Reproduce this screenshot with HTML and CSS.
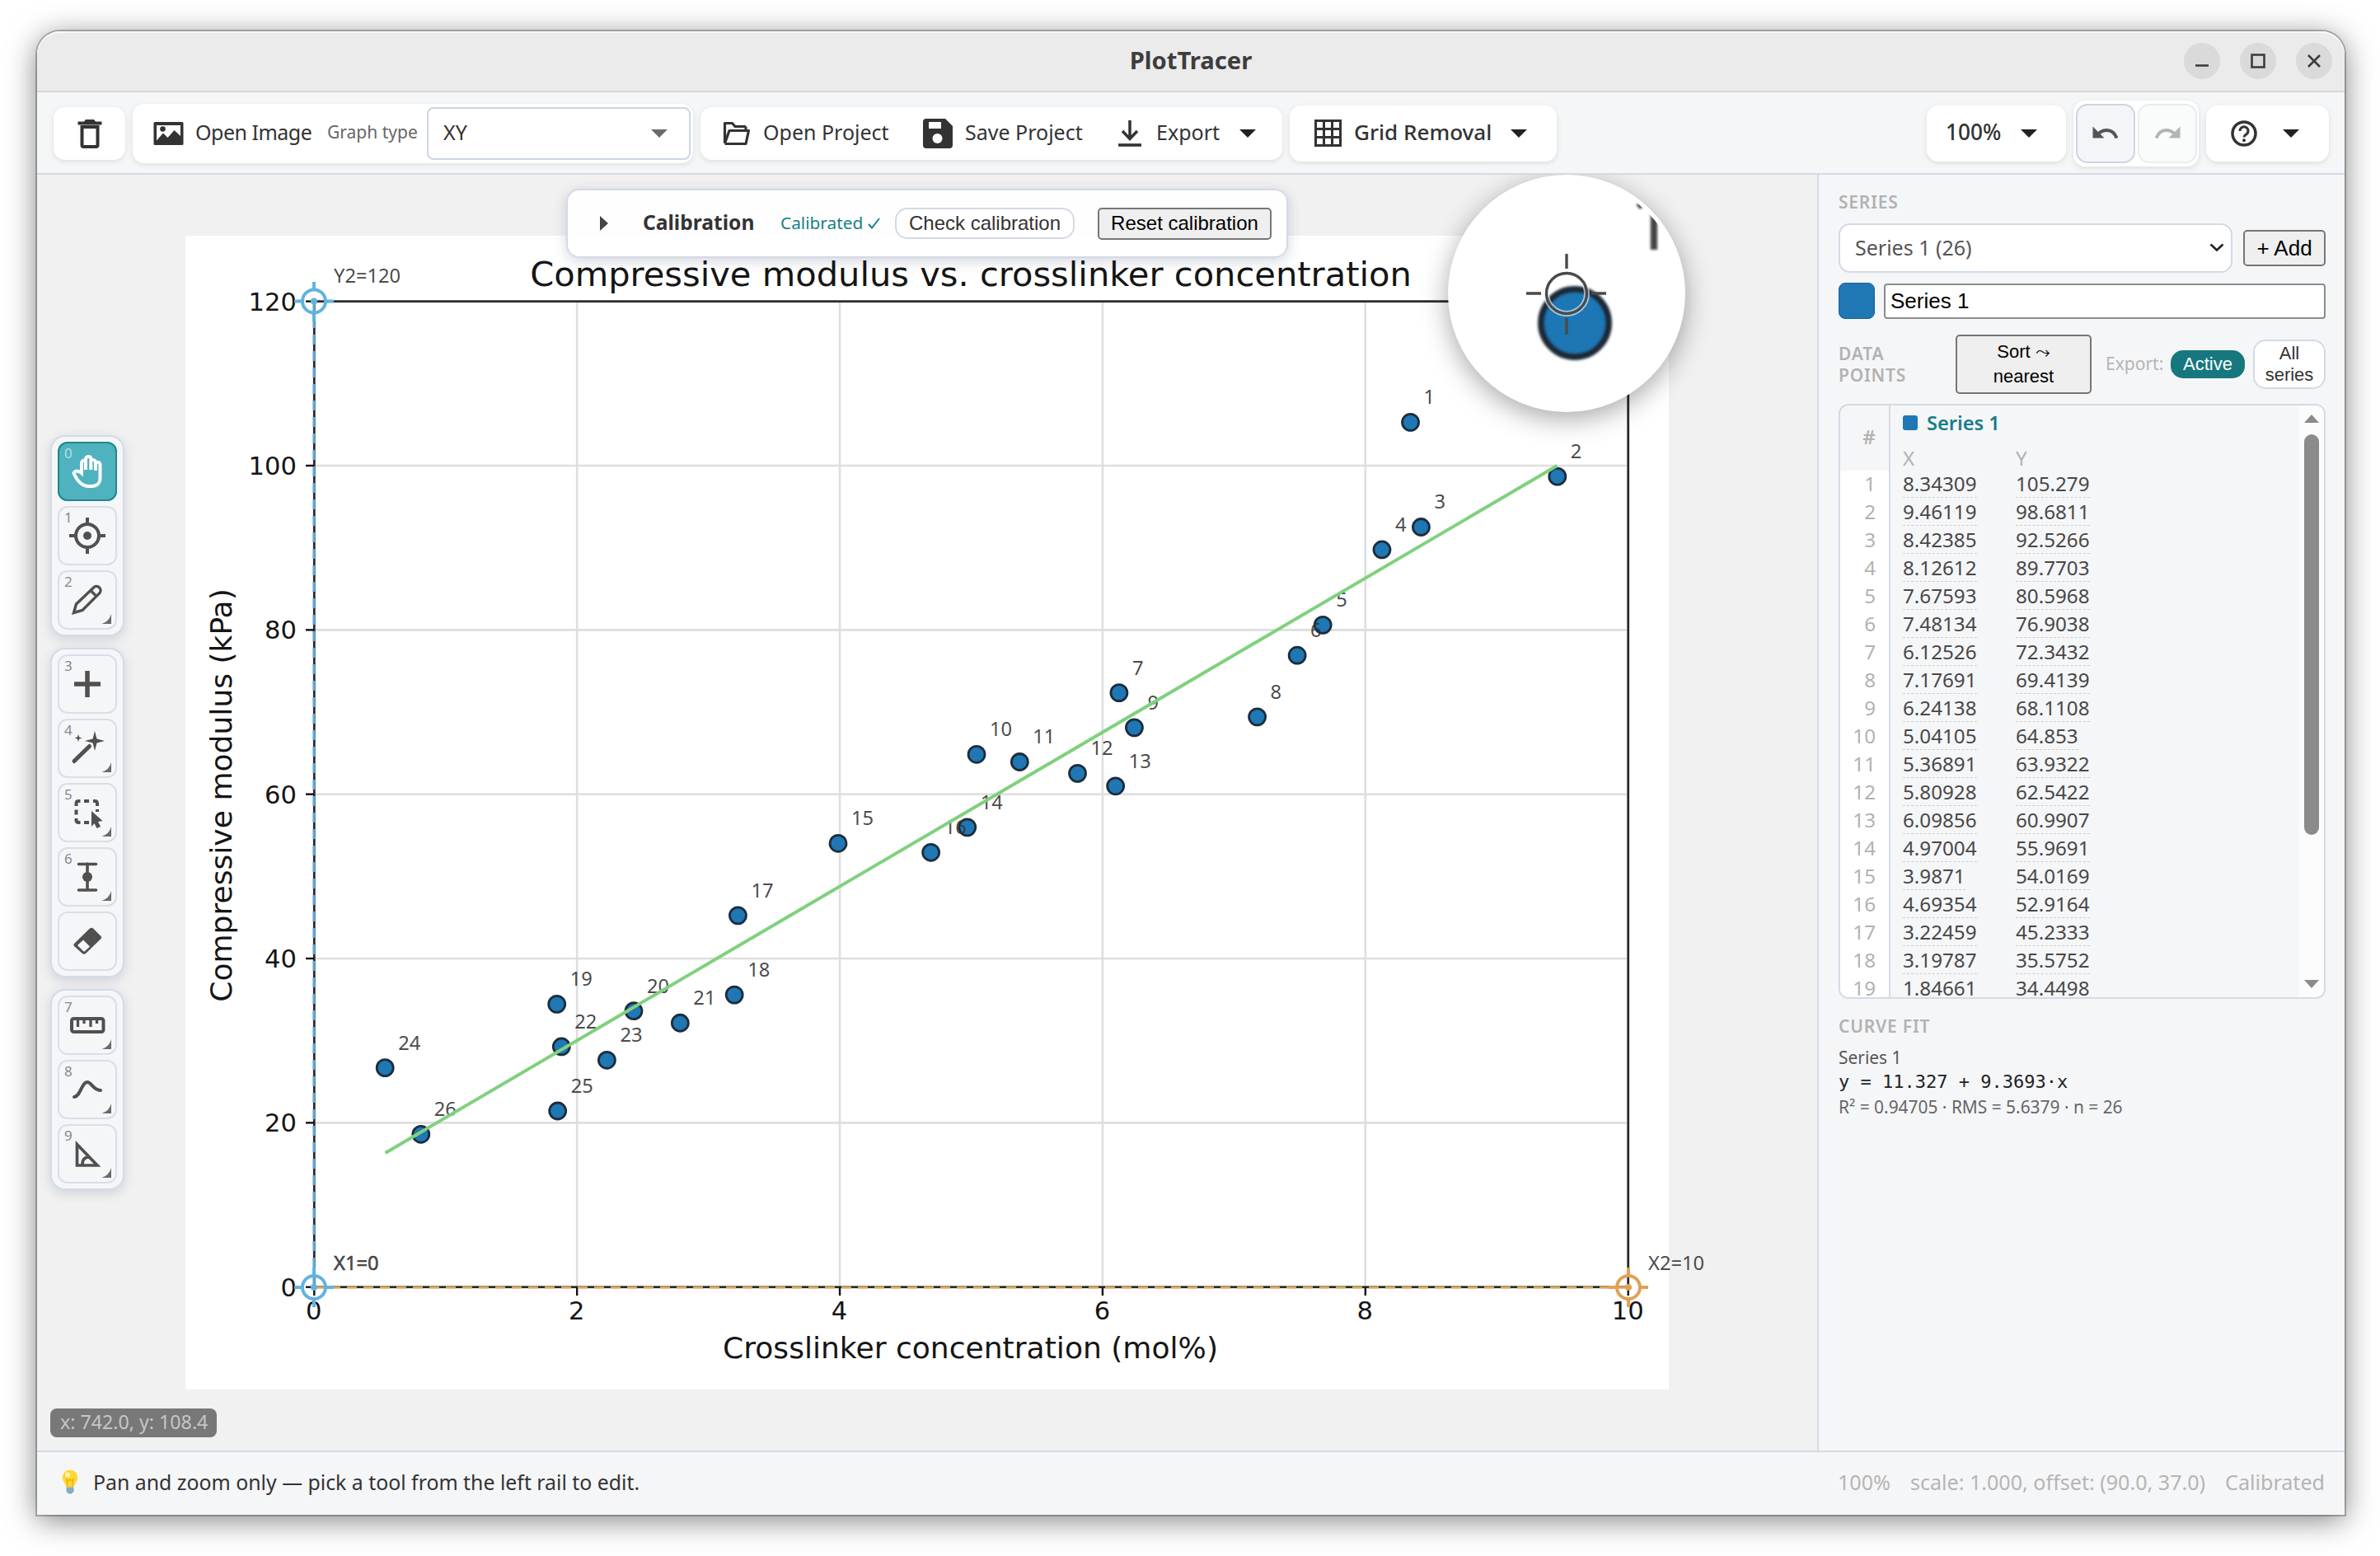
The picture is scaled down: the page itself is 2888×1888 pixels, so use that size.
FILE: index.html
```
<!DOCTYPE html>
<html lang="en">
<head>
    <meta charset="UTF-8">
    <meta name="viewport" content="width=device-width, initial-scale=1.0">
    <title>PlotTracer</title>
    <link rel="stylesheet" href="styles.css">
</head>
<body>
    <div class="window">
        <header class="titlebar">
            <div class="title">PlotTracer</div>
            <div class="window-controls">
                <span class="win-btn"><svg width="44" height="44"><path d="M14 27.500h16" /></svg></span>
                <span class="win-btn"><svg width="44" height="44"><rect x="14.500" y="14.500" width="15" height="15" /></svg></span>
                <span class="win-btn"><svg width="44" height="44"><path d="M15 15l14 14M29 15l-14 14" /></svg></span>
            </div>
        </header>

        <div class="toolbar">
            <div class="group trash">
                <svg width="30" height="36" viewBox="0 0 30 36"><path d="M0.500 3.500h7.500l2-2.500h10l2 2.500h7.500v4h-29z" fill="#333" /><path d="M5.500 10v22q0 2 2 2h15q2 0 2-2V10z" fill="none" stroke="#333" stroke-width="4" /></svg>
            </div>
            <div class="group open-image">
                <svg class="icon" width="37" height="30" viewBox="0 0 37 30"><rect x="0.500" y="1" width="36" height="28" rx="1.500" fill="#333" /><path d="M4 5h29v13l-7.500-7-8 9-5.500-5.500-8 9z" fill="#fff" /><circle cx="11.500" cy="9.500" r="3.300" fill="#333" /></svg>
                <span class="label label-image">Open Image</span>
                <span class="label small">Graph type</span>
                <div class="graph-select"><span class="label">XY</span><i class="caret gray"></i></div>
            </div>
            <div class="group project">
                <svg class="icon" width="34" height="32" viewBox="0 0 34 32"><path d="M2.500 28V3.500h9l3.500 4h13M2.500 28l5.500-15.500h23.500L28 28.500H2.500M28 7.500v5" fill="none" stroke="#333" stroke-width="3.200" stroke-linejoin="round" /></svg>
                <span class="label label-open">Open Project</span>
                <svg class="icon" width="36" height="36" viewBox="0 0 36 36"><path d="M4 0h23l9 9v23q0 4-4 4H4q-4 0-4-4V4q0-4 4-4z" fill="#333" /><rect x="7" y="4" width="15" height="8" fill="#fff" /><circle cx="17.500" cy="24" r="6" fill="#fff" /></svg>
                <span class="label label-save">Save Project</span>
                <svg class="icon" width="30" height="34" viewBox="0 0 30 34"><path d="M15 1v22M6 14l9 9.500 9-9.500" fill="none" stroke="#333" stroke-width="3.500" /><path d="M1 31h28" stroke="#333" stroke-width="3.600" /></svg>
                <span class="label label-export">Export</span>
                <i class="caret"></i>
            </div>
            <div class="group grid-removal">
                <svg class="icon" width="33" height="33" viewBox="0 0 33 33"><path d="M1.500 1.500h30v30h-30zM11.500 1v31M21.500 1v31M1 11.500h31M1 21.500h31" fill="none" stroke="#333" stroke-width="3" /></svg>
                <span class="label medium label-grid">Grid Removal</span>
                <i class="caret"></i>
            </div>
            <div class="spacer"></div>
            <div class="group zoom-level"><span class="label medium label-zoom">100%</span><i class="caret"></i></div>
            <div class="group history">
                <span class="history-btn"><svg width="32" height="20" viewBox="0 0 32 20"><path d="M4 14C11 4 24 2 29.500 15.500" fill="none" stroke="#555" stroke-width="4" /><path d="M0.500 1.500v14h14z" fill="#555" /></svg></span>
                <span class="history-btn off"><svg width="32" height="20" viewBox="0 0 32 20"><path d="M28 14C21 4 8 2 2.500 15.500" fill="none" stroke="#b4b4b4" stroke-width="4" /><path d="M31.500 1.500v14h-14z" fill="#b4b4b4" /></svg></span>
            </div>
            <div class="group help">
                <svg width="32" height="32" viewBox="0 0 32 32"><circle cx="16" cy="16" r="14" fill="none" stroke="#333" stroke-width="3.500" /><path d="M11 13a5 5 0 1 1 8 3.800c-2 1.500-3 2-3 3.700" fill="none" stroke="#333" stroke-width="3" /><circle cx="16" cy="24.300" r="2" fill="#333" /></svg>
                <i class="caret"></i>
            </div>
        </div>

        <div class="main">
            <div class="canvas">
                <svg class="chart" width="2161" height="1548" viewBox="45 212 2161 1548">
                    <rect x="225" y="286" width="1800" height="1400" fill="#fff" />
                    <g id="grid"></g>
                    <rect x="381.300" y="365.700" width="1594.400" height="1196" class="spine" />
                    <g id="ticks"></g>
                    <text x="1178" y="347" class="plot-title">Compressive modulus vs. crosslinker concentration</text>
                    <text x="1177.500" y="1648" class="axis-label">Crosslinker concentration (mol%)</text>
                    <text transform="translate(281 965) rotate(-90)" class="axis-label">Compressive modulus (kPa)</text>
                    <path d="M381 366V1562" class="cal y-cal" />
                    <path d="M381 1562H1976" class="cal x-cal" />
                    <g id="points"></g>
                    <path d="M467.500 1399L1889.500 565" class="fit" />
                    <g class="marker blue"><circle cx="381" cy="365.500" r="14" /><path d="M381 342v9M381 380v10M357 365.500h10M395 365.500h10" /><circle cx="381" cy="365.500" r="2" /></g>
                    <g class="marker blue"><circle cx="381" cy="1562" r="14" /><path d="M381 1538v10M381 1576v10M357 1562h10M395 1562h10" /><circle cx="381" cy="1562" r="2" /></g>
                    <g class="marker orange"><circle cx="1976" cy="1562" r="14" /><path d="M1976 1538v10M1976 1576v10M1952 1562h10M1990 1562h10" /><circle cx="1976" cy="1562" r="2" /></g>
                    <g class="cal-label">
                        <text x="405" y="343">Y2=120</text>
                        <text x="405" y="1541" class="twice">X1=0</text>
                        <text x="2000" y="1541">X2=10</text>
                    </g>
                </svg>

                <div class="calibration">
                    <i class="disclosure"></i>
                    <b class="cal-title">Calibration</b>
                    <span class="cal-state">Calibrated <svg width="15" height="14" viewBox="0 0 15 14"><path d="M1 8l4 4.500L14 1" fill="none" stroke="#177e89" stroke-width="2" /></svg></span>
                    <button class="pill-btn">Check calibration</button>
                    <button class="native-btn">Reset calibration</button>
                </div>

                <div class="rail">
                    <div class="rail-group">
                        <div class="tool active"><span class="key">0</span><svg width="72" height="72"><path d="M29 38V25.500a3.300 3.300 0 0 1 5-2.500v-2a3.300 3.300 0 0 1 6.500-.5v2.500a3.300 3.300 0 0 1 5.500 1.500v2a2.900 2.900 0 0 1 5.500 1V44c0 6-4 10-10.500 10h-3C28 54 22.500 45 19.500 38c2-3.500 5.500-3.500 9.500 0V34M34 22v12M40.300 22v12M46 25v10" /></svg></div>
                        <div class="tool"><span class="key">1</span><svg width="72" height="72"><circle cx="36" cy="36" r="14" /><path d="M36 14v6M36 52v6M14 36h6M52 36h6" /><circle cx="36" cy="36" r="5" class="fill" /></svg></div>
                        <div class="tool"><span class="key">2</span><svg width="72" height="72"><path d="M19.500 51.500l3-10.500L44 20.500a5 5 0 0 1 7 7L30 48.500zM40 24.500l7 7" stroke-width="3.400" /><path d="M65 53v12H53.500q9-3 11.500-12z" class="corner" /></svg></div>
                    </div>
                    <div class="rail-group">
                        <div class="tool"><span class="key">3</span><svg width="72" height="72"><path d="M20 36h32M36 20v32" stroke-width="5.500" /></svg></div>
                        <div class="tool"><span class="key">4</span><svg width="72" height="72"><path d="M20 51.500l18.500-18" stroke-width="5" stroke-linecap="round" /><path d="M45 15l2.500 9.500L57 27l-9.500 2.500L45 39l-2.500-9.500L33 27l9.500-2.500zM25 19l1.200 3.500 3.500 1-3.500 1L25 28l-1.200-3.500-3.500-1 3.500-1z" class="fill" /><path d="M65 53v12H53.500q9-3 11.500-12z" class="corner" /></svg></div>
                        <div class="tool"><span class="key">5</span><svg width="72" height="72"><path d="M22.500 28v-3q0-3 3-3h2M32 22h6M43 22h2q3 0 3 3v3M22.500 32.500v6M48 32v3M22.500 43v2q0 3 3 3h2M32 48h6" /><path d="M41 34l13.500 12-5.500 1 3 6-4.500 2-3-6-3.500 4z" class="fill" /><path d="M65 53v12H53.500q9-3 11.500-12z" class="corner" /></svg></div>
                        <div class="tool"><span class="key">6</span><svg width="72" height="72"><path d="M25.500 20.500h21M25.500 52h21M36 20v32" stroke-width="3.600" stroke-linecap="round" /><circle cx="36" cy="36" r="6" class="fill" /><path d="M65 53v12H53.500q9-3 11.500-12z" class="corner" /></svg></div>
                        <div class="tool"><svg width="72" height="72"><path d="M43 20.500l9.500 9.500q1.500 1.500 0 3L34 51q-2 1.500-4 0l-10-9q-1.500-1.500 0-3l19-18.500q2-1.500 4 0z" class="fill" /><path d="M31 34.500l8 8-6.500 6h-1L24 41z" fill="#f5f6f8" stroke="none" /></svg></div>
                    </div>
                    <div class="rail-group">
                        <div class="tool"><span class="key">7</span><svg width="72" height="72"><rect x="17" y="28" width="38.500" height="16" rx="2.500" /><path d="M24.500 28v10M32 28v6M40 28v10M47.500 28v6" stroke-width="3.300" /><path d="M65 53v12H53.500q9-3 11.500-12z" class="corner" /></svg></div>
                        <div class="tool"><span class="key">8</span><svg width="72" height="72"><path d="M20 45c8-1 9-18 16-18 5 0 7 10 16 10" stroke-linecap="round" /><path d="M65 53v12H53.500q9-3 11.500-12z" class="corner" /></svg></div>
                        <div class="tool"><span class="key">9</span><svg width="72" height="72"><path d="M23.500 24.500V50H48zM30 49c0-6 3-9 8-9" stroke-width="3.700" /><path d="M65 53v12H53.500q9-3 11.500-12z" class="corner" /></svg></div>
                    </div>
                </div>

                <div class="coords">x: 742.0, y: 108.4</div>

                <div class="magnifier">
                    <svg width="288" height="288" viewBox="0 0 288 288">
                        <defs>
                            <clipPath id="lens"><circle cx="144" cy="144" r="139" /></clipPath>
                            <filter id="soft"><feGaussianBlur stdDeviation="1.800" /></filter>
                        </defs>
                        <g clip-path="url(#lens)">
                            <g filter="url(#soft)">
                                <circle cx="154" cy="180" r="41" fill="#1f77b4" stroke="#1d2b38" stroke-width="8" />
                                <text x="220" y="91" class="lens-label">1</text>
                            </g>
                        </g>
                        <circle cx="144" cy="144" r="24.500" class="halo" />
                        <circle cx="144" cy="144" r="24.500" class="cross" />
                        <path d="M144 96v18M144 174v20M95 144h18M174 144h18" class="cross" />
                    </svg>
                </div>
            </div>

            <aside class="panel">
                <h2 class="heading">SERIES</h2>
                <div class="row series-row">
                    <div class="series-select"><span>Series 1 (26)</span><svg width="18" height="10" viewBox="0 0 18 10"><path d="M1.500 1.500L9 8.500l7.500-7" fill="none" stroke="#222" stroke-width="2.600" /></svg></div>
                    <button class="native-btn add">+ Add</button>
                </div>
                <div class="row name-row">
                    <span class="swatch"></span>
                    <input class="name-input" value="Series 1">
                </div>
                <div class="row points-row">
                    <h2 class="heading points-heading">DATA POINTS</h2>
                    <button class="native-btn sort">Sort <span class="wave">⤳</span> nearest</button>
                    <span class="export">Export:</span>
                    <button class="pill-btn on">Active</button>
                    <button class="pill-btn all">All series</button>
                </div>
                <div class="table-box">
                    <div class="table">
                        <div class="thead">
                            <div class="num hash">#</div>
                            <div class="head-cells">
                                <div class="series-name"><i></i>Series 1</div>
                                <div class="xy"><span>X</span><span>Y</span></div>
                            </div>
                        </div>
                        <div id="rows"></div>
                    </div>
                    <div class="scrollbar"><i class="up"></i><i class="thumb"></i><i class="down"></i></div>
                </div>
                <h2 class="heading fit-heading">CURVE FIT</h2>
                <div class="fit-name">Series 1</div>
                <div class="fit-eq">y = 11.327 + 9.3693·x</div>
                <div class="fit-stats">R² = 0.94705 · RMS = 5.6379 · n = 26</div>
            </aside>
        </div>

        <footer class="statusbar">
            <svg class="bulb" width="20" height="30" viewBox="0 0 20 30"><path d="M10 0.500a9.300 9.300 0 0 1 9.300 9.300c0 5-4 6.500-4.300 11.700H5C4.700 16.300.7 14.800.7 9.800A9.300 9.300 0 0 1 10 .5z" fill="#fdd835" /><path d="M7.500 21L6 12l2 1.500 2-1.500 2 1.500 2-1.500-1.500 9" fill="none" stroke="#f2a600" stroke-width="1.200" /><circle cx="7" cy="6.500" r="3" fill="#fff59d" /><path d="M5.500 21.500h9v5L12 29.500H8l-2.500-3z" fill="#82aebf" /></svg>
            <span class="hint">Pan and zoom only — pick a tool from the left rail to edit.</span>
            <span class="stat">100%</span>
            <span class="stat">scale: 1.000, offset: (90.0, 37.0)</span>
            <span class="stat">Calibrated</span>
        </footer>
    </div>
    <script src="script.js"></script>
</body>
</html>
```

FILE: styles.css
```
* {
    box-sizing: border-box;
}
body {
    margin: 0;
    padding: 38px 43px 50px 45px;
    background: #fff;
    font-family: "Noto Sans", sans-serif;
    font-size: 25px;
    color: #333;
}
.window {
    width: 2800px;
    height: 1800px;
    display: flex;
    flex-direction: column;
    border-radius: 28px 28px 0 0;
    box-shadow: 0 0 0 2px rgba(0, 0, 0, 0.25), 0 6px 36px rgba(0, 0, 0, 0.5);
}
.titlebar {
    height: 74px;
    flex: none;
    display: flex;
    align-items: center;
    justify-content: flex-end;
    padding-right: 15px;
    position: relative;
    background: #ebebeb;
    border-bottom: 2px solid #d6d7d8;
    border-radius: 28px 28px 0 0;
    box-shadow: inset 0 2px 0 #f9f9f9;
}
.title {
    position: absolute;
    left: 0;
    right: 0;
    top: 15px;
    text-align: center;
    font-size: 29.2px;
    font-weight: bold;
    line-height: 40px;
    color: #3d3d3d;
}
.window-controls {
    display: flex;
    gap: 24px;
}
.win-btn {
    width: 44px;
    height: 44px;
    border-radius: 50%;
    background: #dadada;
}
.win-btn svg {
    display: block;
    fill: none;
    stroke: #3d3d3d;
    stroke-width: 2.6;
}

/* toolbar */
.toolbar {
    height: 100px;
    flex: none;
    display: flex;
    align-items: center;
    gap: 9px;
    padding: 1px 19px 0 20px;
    background: #f5f6f8;
    border-bottom: 2px solid #d3dae4;
}
.group {
    height: 64px;
    display: flex;
    align-items: center;
    background: #fff;
    border-radius: 14px;
    box-shadow: 0 2px 6px rgba(0, 0, 0, 0.1);
}
.icon {
    flex: none;
}
.label {
    padding-bottom: 4px;
    white-space: nowrap;
}
.medium {
    font-weight: 500;
}
.small {
    font-size: 21px;
    color: #666;
}
.caret {
    flex: none;
    border: 10px solid transparent;
    border-top: 10px solid #222;
    border-bottom: 0;
}
.caret.gray {
    border-top-color: #6b6b6b;
}
.trash {
    width: 87px;
    justify-content: center;
}
.open-image {
    width: 680px;
    height: 72px;
    padding: 0 3px 0 25px;
}
.label-image {
    width: 160px;
    margin-left: 14px;
    letter-spacing: -0.5px;
}
.graph-select {
    width: 320px;
    height: 64px;
    margin-left: auto;
    padding: 0 26px 0 18px;
    display: flex;
    align-items: center;
    justify-content: space-between;
    border: 2px solid #cdd6e2;
    border-radius: 8px;
}
.project {
    width: 706px;
    padding-left: 27px;
}
.label-open {
    width: 194px;
    margin-left: 15px;
}
.label-save {
    width: 185px;
    margin-left: 15px;
}
.label-export {
    width: 101px;
    margin-left: 17px;
}
.grid-removal {
    width: 324px;
    height: 68px;
    padding-left: 30px;
}
.label-grid {
    width: 190px;
    margin-left: 15px;
    font-size: 26.1px;
}
.spacer {
    flex: 1;
}
.zoom-level {
    width: 169px;
    height: 68px;
    padding-left: 23px;
}
.label-zoom {
    width: 91px;
    font-size: 26.2px;
}
.history {
    width: 152px;
    height: 80px;
    justify-content: center;
    gap: 3px;
}
.history-btn {
    width: 72px;
    height: 72px;
    display: flex;
    align-items: center;
    justify-content: center;
    background: #f3f5f8;
    border: 2px solid #cdd6e2;
    border-radius: 14px;
}
.history-btn.off {
    background: #fafbfb;
    border-color: #e8ecf0;
}
.help {
    width: 149px;
    height: 68px;
    padding-left: 30px;
    gap: 31px;
}

/* canvas */
.main {
    flex: 1;
    min-height: 0;
    display: flex;
}
.canvas {
    width: 2160px;
    position: relative;
    overflow: hidden;
    background: #f1f1f1;
}
.chart {
    display: block;
}
.spine {
    fill: none;
    stroke: #2b2b2b;
    stroke-width: 2.8;
}
.grid-line {
    stroke: #dedede;
    stroke-width: 2.6;
}
.tick {
    stroke: #111;
    stroke-width: 2.4;
}
.tick-label,
.plot-title,
.axis-label {
    font-family: "DejaVu Sans", sans-serif;
    fill: #151515;
}
.tick-label {
    font-size: 30.6px;
}
.plot-title {
    font-size: 41.6px;
    text-anchor: middle;
}
.axis-label {
    font-size: 36.1px;
    text-anchor: middle;
}
.cal {
    fill: none;
    stroke-width: 3;
    stroke-dasharray: 12 8;
}
.y-cal {
    stroke: #5aabdb;
}
.x-cal {
    stroke: #e0a154;
}
.dot {
    fill: #1f77b4;
    stroke: #1c2d3d;
    stroke-width: 2.8;
}
.dot-label,
.cal-label {
    font-size: 23.7px;
    fill: #333;
    fill-opacity: 0.9;
}
.twice {
    stroke: #333;
    stroke-width: 0.5;
}
.fit {
    stroke: #7fd17f;
    stroke-width: 4;
}
.marker {
    fill: none;
    stroke-width: 4;
}
.blue {
    stroke: #61b3e0;
}
.orange {
    stroke: #e0a154;
}
.calibration {
    position: absolute;
    left: 642px;
    top: 17px;
    width: 876px;
    height: 84px;
    display: flex;
    align-items: center;
    padding: 0 18px 0 39px;
    background: rgba(255, 255, 255, 0.9);
    border: 2px solid #d3dae6;
    border-radius: 16px;
    box-shadow: 0 4px 16px rgba(40, 50, 90, 0.2);
}
.disclosure {
    border: 9px solid transparent;
    border-left: 10px solid #444;
    border-right: 0;
}
.cal-title {
    width: 167px;
    margin-left: 42px;
    padding-bottom: 4px;
    font-size: 24.6px;
}
.cal-state {
    width: 139px;
    padding-bottom: 3px;
    font-size: 20.8px;
    color: #177e89;
    white-space: nowrap;
}
button,
input {
    font-family: "Liberation Sans", Arial, sans-serif;
    margin: 0;
    padding: 0;
}
.pill-btn {
    flex: none;
    width: 218px;
    height: 38px;
    font-size: 24px;
    color: #333;
    background: #fff;
    border: 2px solid #d3dae6;
    border-radius: 15px;
}
.native-btn {
    flex: none;
    width: 211px;
    height: 39px;
    font-size: 24px;
    color: #000;
    background: #efefef;
    border: 2px solid #767676;
    border-radius: 5px;
}
.calibration .native-btn {
    margin-left: auto;
}

/* tool rail */
.rail {
    position: absolute;
    left: 16px;
    top: 316px;
    display: flex;
    flex-direction: column;
    gap: 14px;
}
.rail-group {
    width: 90px;
    display: flex;
    flex-direction: column;
    gap: 6px;
    padding: 6px 7px;
    background: #f5f6f8;
    border: 2px solid #d3dce8;
    border-radius: 18px;
    box-shadow: 0 4px 14px rgba(40, 50, 90, 0.16);
}
.tool {
    height: 72px;
    position: relative;
    border-radius: 12px;
    box-shadow: inset 0 0 0 2px #d7dfe8;
}
.tool svg {
    display: block;
    fill: none;
    stroke: #505050;
    stroke-width: 4;
}
.tool .fill {
    fill: #505050;
    stroke: none;
}
.tool .corner {
    fill: #6b6b6b;
    stroke: none;
}
.tool.active {
    background: #4fb2bf;
    box-shadow: inset 0 0 0 2px #24868f;
}
.tool.active svg {
    stroke: #fff;
}
.key {
    position: absolute;
    left: 8px;
    top: 3px;
    font-size: 17px;
    line-height: 22px;
    color: #888;
}
.active .key {
    color: #b5e0e5;
}
.coords {
    position: absolute;
    left: 16px;
    top: 1497px;
    width: 202px;
    height: 35px;
    padding-left: 12px;
    font-size: 23.2px;
    line-height: 32px;
    color: #c6c6c6;
    background: #787878;
    border-radius: 8px;
    white-space: nowrap;
}
.magnifier {
    position: absolute;
    left: 1712px;
    top: 0;
    width: 288px;
    height: 288px;
    border-radius: 50%;
    background: #fff;
    box-shadow: 0 8px 32px rgba(0, 0, 0, 0.35);
}
.magnifier svg {
    display: block;
}
.lens-label {
    font-size: 96px;
    fill: #444;
}
.halo {
    fill: none;
    stroke: rgba(255, 255, 255, 0.6);
    stroke-width: 7;
}
.cross {
    fill: none;
    stroke: #4a4a4a;
    stroke-width: 3.4;
}

/* side panel */
.panel {
    width: 640px;
    padding: 20px 23px 0 24px;
    background: #f5f6f8;
    border-left: 2px solid #d3dbe6;
}
.heading {
    margin: 0;
    font-size: 21px;
    font-weight: 600;
    line-height: 26px;
    letter-spacing: 0.8px;
    color: #b2b2b2;
}
.row {
    display: flex;
    align-items: center;
}
.series-row {
    justify-content: space-between;
    margin-top: 13px;
}
.series-select {
    width: 478px;
    height: 60px;
    display: flex;
    align-items: center;
    justify-content: space-between;
    padding: 0 8px 3px 18px;
    color: #555;
    background: #fff;
    border: 2px solid #d3dae6;
    border-radius: 14px;
}
.add {
    width: 100px;
    height: 44px;
    font-size: 26px;
}
.name-row {
    gap: 11px;
    margin-top: 12px;
}
.swatch {
    width: 44px;
    height: 44px;
    background: #1f77b4;
    border: 1px solid #196297;
    border-radius: 8px;
}
.name-input {
    flex: 1;
    height: 43px;
    padding-left: 6px;
    font-size: 26px;
    color: #000;
    background: #fff;
    border: 2px solid #8c8c8c;
    border-radius: 4px;
}
.points-row {
    margin-top: 19px;
}
.points-heading {
    width: 142px;
    padding-right: 50px;
}
.sort {
    width: 165px;
    height: 72px;
    padding: 0 30px;
    font-size: 22px;
    line-height: 30px;
}
.wave {
    font-family: "DejaVu Sans", sans-serif;
    font-size: 22px;
    line-height: 20px;
}
.export {
    width: 79px;
    margin-left: 17px;
    padding-bottom: 3px;
    font-size: 21px;
    color: #b5b5b5;
}
.pill-btn.on {
    width: 90px;
    height: 34px;
    font-size: 22px;
    color: #fff;
    background: #17777f;
    border: 0;
}
.pill-btn.all {
    width: 88px;
    height: 60px;
    margin-left: auto;
    padding: 0 8px;
    font-size: 22px;
    line-height: 26px;
}
.table-box {
    height: 722px;
    margin-top: 12px;
    display: flex;
    overflow: hidden;
    border: 2px solid #d3dbe6;
    border-radius: 12px;
}
.table {
    flex: 1;
    font-size: 24.2px;
    color: #484848;
}
.thead {
    height: 79px;
    display: flex;
}
.num {
    width: 61px;
    padding-right: 16px;
    text-align: right;
    color: #b2b2b2;
    border-right: 2px solid #d3dbe6;
}
.hash {
    padding-top: 21px;
    font-weight: 600;
}
.head-cells {
    padding-left: 15px;
}
.series-name {
    height: 47px;
    display: flex;
    align-items: center;
    padding-bottom: 6px;
    font-size: 23.6px;
    font-weight: 600;
    color: #177e89;
}
.series-name i {
    width: 18px;
    height: 18px;
    margin-right: 11px;
    background: #1f77b4;
    border-radius: 3px;
}
.xy {
    display: flex;
    line-height: 34px;
    color: #b2b2b2;
}
.xy span {
    width: 137px;
}
.data-row {
    height: 34px;
    display: flex;
    line-height: 32px;
}
.data-row .num {
    background: #fff;
}
.cell {
    width: 137px;
}
.cell:nth-child(2) {
    margin-left: 15px;
}
.cell span {
    display: inline-block;
    height: 33px;
    border-bottom: 1px dashed #d0d0d0;
}
.scrollbar {
    width: 30px;
    display: flex;
    flex-direction: column;
    align-items: center;
    background: #fcfcfc;
}
.up,
.down {
    border: 9px solid transparent;
}
.up {
    margin-top: 11px;
    border-top: 0;
    border-bottom: 10px solid #8b8b8b;
}
.thumb {
    width: 18px;
    height: 486px;
    margin-top: 14px;
    border-radius: 9px;
    background: #8b8b8b;
}
.down {
    margin-top: auto;
    margin-bottom: 11px;
    border-bottom: 0;
    border-top: 10px solid #8b8b8b;
}
.fit-heading {
    margin-top: 20px;
}
.fit-name,
.fit-stats {
    font-size: 20.9px;
    line-height: 30px;
    color: #666;
}
.fit-name {
    margin-top: 10px;
    color: #555;
}
.fit-eq {
    font-family: "DejaVu Sans Mono", monospace;
    font-size: 22px;
    line-height: 30px;
    color: #222;
}

/* status bar */
.statusbar {
    height: 78px;
    flex: none;
    display: flex;
    align-items: center;
    gap: 24px;
    padding: 0 24px 4px 30px;
    background: #f5f6f8;
    border-top: 2px solid #d3dbe6;
}
.hint {
    flex: 1;
    margin-left: -6px;
    font-size: 24.85px;
}
.stat {
    font-size: 25.1px;
    color: #b5b5b5;
}
```

FILE: script.js
```
const points = [
    [8.34309, 105.279], [9.46119, 98.6811], [8.42385, 92.5266], [8.12612, 89.7703],
    [7.67593, 80.5968], [7.48134, 76.9038], [6.12526, 72.3432], [7.17691, 69.4139],
    [6.24138, 68.1108], [5.04105, 64.853], [5.36891, 63.9322], [5.80928, 62.5422],
    [6.09856, 60.9907], [4.97004, 55.9691], [3.9871, 54.0169], [4.69354, 52.9164],
    [3.22459, 45.2333], [3.19787, 35.5752], [1.84661, 34.4498], [2.4316, 33.61],
    [2.785, 32.15], [1.8816, 29.27], [2.2272, 27.63], [0.53876, 26.69],
    [1.8527, 21.44], [0.8122, 18.6]
];

const px = x => 381.3 + x * 159.44;
const py = y => 1561.7 - y * 9.967;

let grid = "";
let ticks = "";
for (let x = 0; x <= 10; x += 2) {
    if (x > 0 && x < 10) grid += `<path class="grid-line" d="M${px(x)} 367V1560" />`;
    ticks += `<path class="tick" d="M${px(x)} 1562v10" />`;
    ticks += `<text class="tick-label" text-anchor="middle" x="${px(x) - 0.5}" y="1601">${x}</text>`;
}
for (let y = 0; y <= 120; y += 20) {
    if (y > 0 && y < 120) grid += `<path class="grid-line" d="M383 ${py(y)}H1974" />`;
    ticks += `<path class="tick" d="M371 ${py(y)}h10" />`;
    ticks += `<text class="tick-label" text-anchor="end" x="360" y="${py(y) + 11}">${y}</text>`;
}
document.getElementById("grid").innerHTML = grid;
document.getElementById("ticks").innerHTML = ticks;

// dots first so the labels stay on top of them
let dots = "";
let labels = "";
let rows = "";
points.forEach(([x, y], i) => {
    dots += `<circle class="dot" cx="${px(x)}" cy="${py(y)}" r="10" />`;
    labels += `<text class="dot-label" x="${px(x) + 16}" y="${py(y) - 22}">${i + 1}</text>`;
    if (i < 19) {
        rows += `<div class="data-row"><div class="num">${i + 1}</div><div class="cell"><span>${x}</span></div><div class="cell"><span>${y}</span></div></div>`;
    }
});
document.getElementById("points").innerHTML = dots + labels;
document.getElementById("rows").innerHTML = rows;
```
